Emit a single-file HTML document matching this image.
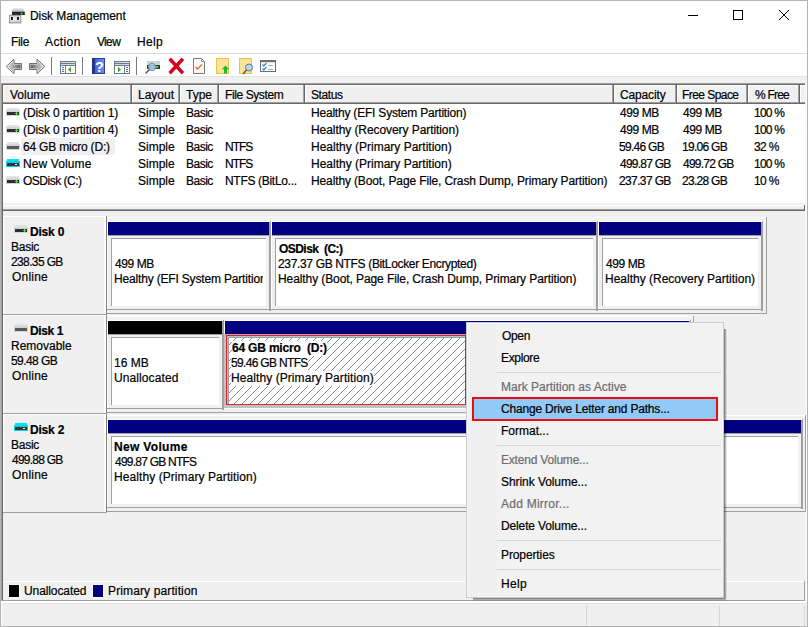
<!DOCTYPE html>
<html><head><meta charset="utf-8"><style>
html,body{margin:0;padding:0}
body{width:808px;height:627px;overflow:hidden;position:relative;background:#fff}
body>div{position:absolute}
.t{position:absolute;-webkit-text-stroke:0.2px currentColor;font-family:"Liberation Sans",sans-serif;font-size:12px;line-height:15px;white-space:pre;color:#000}
</style></head><body>
<div style="left:0px;top:0px;width:808px;height:627px;background:#fff;"></div>
<div class="t" style="left:30px;top:9px;color:#000;letter-spacing:-0.071px;">Disk Management</div>
<div class="t" style="left:11px;top:35px;color:#000;letter-spacing:-0.333px;">File</div>
<div class="t" style="left:45px;top:35px;color:#000;letter-spacing:0.400px;">Action</div>
<div class="t" style="left:97px;top:35px;color:#000;letter-spacing:-0.667px;">View</div>
<div class="t" style="left:137px;top:35px;color:#000;letter-spacing:0.333px;">Help</div>
<div style="left:1px;top:53px;width:807px;height:1px;background:#dadada;"></div>
<div style="left:1px;top:76px;width:806px;height:1px;background:#e3e3e3;"></div>
<div style="left:1px;top:77px;width:806px;height:6px;background:#f0f0f0;"></div>
<div style="left:1px;top:83px;width:806px;height:127px;background:#fff;"></div>
<div style="left:1px;top:83px;width:806px;height:1px;background:#a0a0a0;"></div>
<div style="left:2px;top:84px;width:804px;height:1px;background:#696969;"></div>
<div style="left:1px;top:83px;width:1px;height:518px;background:#a0a0a0;"></div>
<div style="left:2px;top:84px;width:1px;height:517px;background:#696969;"></div>
<div style="left:3px;top:85px;width:803px;height:19px;background:#f0f0f0;"></div>
<div style="left:3px;top:85px;width:803px;height:1px;background:#fff;"></div>
<div style="left:3px;top:102px;width:803px;height:1px;background:#a0a0a0;"></div>
<div style="left:3px;top:103px;width:803px;height:1px;background:#696969;"></div>
<div style="left:3px;top:85px;width:1px;height:17px;background:#fff;"></div>
<div style="left:130px;top:85px;width:1px;height:17px;background:#a0a0a0;"></div>
<div style="left:131px;top:85px;width:1px;height:19px;background:#696969;"></div>
<div style="left:132px;top:85px;width:1px;height:17px;background:#fff;"></div>
<div style="left:178px;top:85px;width:1px;height:17px;background:#a0a0a0;"></div>
<div style="left:179px;top:85px;width:1px;height:19px;background:#696969;"></div>
<div style="left:180px;top:85px;width:1px;height:17px;background:#fff;"></div>
<div style="left:217px;top:85px;width:1px;height:17px;background:#a0a0a0;"></div>
<div style="left:218px;top:85px;width:1px;height:19px;background:#696969;"></div>
<div style="left:219px;top:85px;width:1px;height:17px;background:#fff;"></div>
<div style="left:303px;top:85px;width:1px;height:17px;background:#a0a0a0;"></div>
<div style="left:304px;top:85px;width:1px;height:19px;background:#696969;"></div>
<div style="left:305px;top:85px;width:1px;height:17px;background:#fff;"></div>
<div style="left:612px;top:85px;width:1px;height:17px;background:#a0a0a0;"></div>
<div style="left:613px;top:85px;width:1px;height:19px;background:#696969;"></div>
<div style="left:614px;top:85px;width:1px;height:17px;background:#fff;"></div>
<div style="left:675px;top:85px;width:1px;height:17px;background:#a0a0a0;"></div>
<div style="left:676px;top:85px;width:1px;height:19px;background:#696969;"></div>
<div style="left:677px;top:85px;width:1px;height:17px;background:#fff;"></div>
<div style="left:746px;top:85px;width:1px;height:17px;background:#a0a0a0;"></div>
<div style="left:747px;top:85px;width:1px;height:19px;background:#696969;"></div>
<div style="left:748px;top:85px;width:1px;height:17px;background:#fff;"></div>
<div style="left:798px;top:85px;width:1px;height:17px;background:#a0a0a0;"></div>
<div style="left:799px;top:85px;width:1px;height:19px;background:#696969;"></div>
<div style="left:800px;top:85px;width:1px;height:17px;background:#fff;"></div>
<div class="t" style="left:10px;top:88px;color:#000;letter-spacing:0.000px;">Volume</div>
<div class="t" style="left:138px;top:88px;color:#000;letter-spacing:0.000px;">Layout</div>
<div class="t" style="left:186px;top:88px;color:#000;letter-spacing:0.000px;">Type</div>
<div class="t" style="left:225px;top:88px;color:#000;letter-spacing:-0.400px;">File System</div>
<div class="t" style="left:311px;top:88px;color:#000;letter-spacing:-0.400px;">Status</div>
<div class="t" style="left:620px;top:88px;color:#000;letter-spacing:-0.143px;">Capacity</div>
<div class="t" style="left:682px;top:88px;color:#000;letter-spacing:-0.556px;">Free Space</div>
<div class="t" style="left:755px;top:88px;color:#000;letter-spacing:-0.800px;">% Free</div>
<div style="left:7px;top:108px;width:12px;height:2px;background:#e0e2e5;"></div>
<div style="left:6px;top:110px;width:14px;height:6px;background:#d2d4d8;"></div>
<div style="left:7px;top:112px;width:12px;height:3px;background:#2e2e2e;"></div>
<div style="left:15px;top:113px;width:3px;height:1px;background:#3cf03c;"></div>
<div style="left:16px;top:112px;width:1px;height:3px;background:#3cf03c;"></div>
<div class="t" style="left:23px;top:106px;color:#000;letter-spacing:-0.105px;">(Disk 0 partition 1)</div>
<div class="t" style="left:138px;top:106px;color:#000;letter-spacing:0.000px;">Simple</div>
<div class="t" style="left:186px;top:106px;color:#000;letter-spacing:-0.500px;">Basic</div>
<div class="t" style="left:311px;top:106px;color:#000;letter-spacing:-0.207px;">Healthy (EFI System Partition)</div>
<div class="t" style="left:620px;top:106px;color:#000;letter-spacing:-0.400px;">499 MB</div>
<div class="t" style="left:683px;top:106px;color:#000;letter-spacing:-0.400px;">499 MB</div>
<div class="t" style="left:754px;top:106px;color:#000;letter-spacing:-0.750px;">100 %</div>
<div style="left:7px;top:125px;width:12px;height:2px;background:#e0e2e5;"></div>
<div style="left:6px;top:127px;width:14px;height:6px;background:#d2d4d8;"></div>
<div style="left:7px;top:129px;width:12px;height:3px;background:#2e2e2e;"></div>
<div style="left:15px;top:130px;width:3px;height:1px;background:#3cf03c;"></div>
<div style="left:16px;top:129px;width:1px;height:3px;background:#3cf03c;"></div>
<div class="t" style="left:23px;top:123px;color:#000;letter-spacing:-0.105px;">(Disk 0 partition 4)</div>
<div class="t" style="left:138px;top:123px;color:#000;letter-spacing:0.000px;">Simple</div>
<div class="t" style="left:186px;top:123px;color:#000;letter-spacing:-0.500px;">Basic</div>
<div class="t" style="left:311px;top:123px;color:#000;letter-spacing:-0.074px;">Healthy (Recovery Partition)</div>
<div class="t" style="left:620px;top:123px;color:#000;letter-spacing:-0.400px;">499 MB</div>
<div class="t" style="left:683px;top:123px;color:#000;letter-spacing:-0.400px;">499 MB</div>
<div class="t" style="left:754px;top:123px;color:#000;letter-spacing:-0.750px;">100 %</div>
<div style="left:21px;top:138px;width:94px;height:17px;background:#f0f0f0;"></div>
<div style="left:7px;top:142px;width:12px;height:2px;background:#e0e2e5;"></div>
<div style="left:6px;top:144px;width:14px;height:6px;background:#d2d4d8;"></div>
<div style="left:7px;top:146px;width:12px;height:3px;background:#585858;"></div>
<div class="t" style="left:23px;top:140px;color:#000;letter-spacing:-0.200px;">64 GB micro (D:)</div>
<div class="t" style="left:138px;top:140px;color:#000;letter-spacing:0.000px;">Simple</div>
<div class="t" style="left:186px;top:140px;color:#000;letter-spacing:-0.500px;">Basic</div>
<div class="t" style="left:225px;top:140px;color:#000;letter-spacing:-1.000px;">NTFS</div>
<div class="t" style="left:311px;top:140px;color:#000;letter-spacing:0.000px;">Healthy (Primary Partition)</div>
<div class="t" style="left:619px;top:140px;color:#000;letter-spacing:-0.714px;">59.46 GB</div>
<div class="t" style="left:682px;top:140px;color:#000;letter-spacing:-0.714px;">19.06 GB</div>
<div class="t" style="left:754px;top:140px;color:#000;letter-spacing:-0.667px;">32 %</div>
<div style="left:7px;top:159px;width:12px;height:2px;background:#00e6f6;"></div>
<div style="left:6px;top:161px;width:14px;height:6px;background:#00d4e6;"></div>
<div style="left:7px;top:163px;width:12px;height:3px;background:#3a3030;"></div>
<div style="left:15px;top:164px;width:2px;height:1px;background:#ffffff;"></div>
<div class="t" style="left:23px;top:157px;color:#000;letter-spacing:0.111px;">New Volume</div>
<div class="t" style="left:138px;top:157px;color:#000;letter-spacing:0.000px;">Simple</div>
<div class="t" style="left:186px;top:157px;color:#000;letter-spacing:-0.500px;">Basic</div>
<div class="t" style="left:225px;top:157px;color:#000;letter-spacing:-1.000px;">NTFS</div>
<div class="t" style="left:311px;top:157px;color:#000;letter-spacing:0.000px;">Healthy (Primary Partition)</div>
<div class="t" style="left:620px;top:157px;color:#000;letter-spacing:-0.750px;">499.87 GB</div>
<div class="t" style="left:683px;top:157px;color:#000;letter-spacing:-0.750px;">499.72 GB</div>
<div class="t" style="left:754px;top:157px;color:#000;letter-spacing:-0.750px;">100 %</div>
<div style="left:7px;top:176px;width:12px;height:2px;background:#e0e2e5;"></div>
<div style="left:6px;top:178px;width:14px;height:6px;background:#d2d4d8;"></div>
<div style="left:7px;top:180px;width:12px;height:3px;background:#2e2e2e;"></div>
<div style="left:15px;top:181px;width:3px;height:1px;background:#3cf03c;"></div>
<div style="left:16px;top:180px;width:1px;height:3px;background:#3cf03c;"></div>
<div class="t" style="left:23px;top:174px;color:#000;letter-spacing:-0.500px;">OSDisk (C:)</div>
<div class="t" style="left:138px;top:174px;color:#000;letter-spacing:0.000px;">Simple</div>
<div class="t" style="left:186px;top:174px;color:#000;letter-spacing:-0.500px;">Basic</div>
<div class="t" style="left:225px;top:174px;color:#000;letter-spacing:-0.308px;">NTFS (BitLo...</div>
<div class="t" style="left:311px;top:174px;color:#000;letter-spacing:-0.127px;">Healthy (Boot, Page File, Crash Dump, Primary Partition)</div>
<div class="t" style="left:619px;top:174px;color:#000;letter-spacing:-0.625px;">237.37 GB</div>
<div class="t" style="left:682px;top:174px;color:#000;letter-spacing:-0.714px;">23.28 GB</div>
<div class="t" style="left:754px;top:174px;color:#000;letter-spacing:-0.667px;">10 %</div>
<div style="left:3px;top:203px;width:803px;height:2px;background:#f0f0f0;"></div>
<div style="left:3px;top:205px;width:803px;height:1px;background:#fff;"></div>
<div style="left:3px;top:206px;width:803px;height:3px;background:#f0f0f0;"></div>
<div style="left:3px;top:209px;width:803px;height:1px;background:#a0a0a0;"></div>
<div style="left:3px;top:210px;width:803px;height:1px;background:#696969;"></div>
<div style="left:804px;top:205px;width:1px;height:6px;background:#696969;"></div>
<div style="left:3px;top:211px;width:802px;height:390px;background:#f0f0f0;"></div>
<div style="left:805px;top:83px;width:1px;height:544px;background:#f4f4f4;"></div>
<div style="left:806px;top:83px;width:1px;height:544px;background:#fff;"></div>
<div style="left:807px;top:0px;width:1px;height:627px;background:#b4b4b4;"></div>
<div style="left:3px;top:216px;width:103px;height:1px;background:#fff;"></div>
<div style="left:3px;top:216px;width:1px;height:99px;background:#fff;"></div>
<div style="left:4px;top:217px;width:101px;height:97px;background:#f0f0f0;"></div>
<div style="left:104px;top:216px;width:1px;height:99px;background:#fff;"></div>
<div style="left:105px;top:217px;width:1px;height:98px;background:#fff;"></div>
<div style="left:106px;top:217px;width:1px;height:97px;background:#808080;"></div>
<div style="left:106px;top:216px;width:1px;height:1px;background:#909090;"></div>
<div style="left:3px;top:314px;width:104px;height:1px;background:#a0a0a0;"></div>
<div style="left:3px;top:315px;width:104px;height:1px;background:#fff;"></div>
<div style="left:15px;top:225px;width:12px;height:2px;background:#e0e2e5;"></div>
<div style="left:14px;top:227px;width:14px;height:6px;background:#d2d4d8;"></div>
<div style="left:15px;top:229px;width:12px;height:3px;background:#2e2e2e;"></div>
<div style="left:23px;top:230px;width:3px;height:1px;background:#3cf03c;"></div>
<div style="left:24px;top:229px;width:1px;height:3px;background:#3cf03c;"></div>
<div class="t" style="left:30px;top:225px;color:#000;font-weight:bold;letter-spacing:-0.200px;">Disk 0</div>
<div class="t" style="left:11px;top:240px;color:#000;letter-spacing:-0.250px;">Basic</div>
<div class="t" style="left:11px;top:255px;color:#000;letter-spacing:-0.625px;">238.35 GB</div>
<div class="t" style="left:12px;top:270px;color:#000;letter-spacing:0.200px;">Online</div>
<div style="left:107px;top:217px;width:660px;height:1px;background:#fff;"></div>
<div style="left:766px;top:217px;width:1px;height:97px;background:#a0a0a0;"></div>
<div style="left:107px;top:313px;width:660px;height:1px;background:#a0a0a0;"></div>
<div style="left:107px;top:221px;width:165px;height:1px;background:#fff;"></div>
<div style="left:107px;top:221px;width:1px;height:89px;background:#fff;"></div>
<div style="left:108px;top:222px;width:161px;height:13px;background:#000080;"></div>
<div style="left:269px;top:222px;width:1px;height:89px;background:#a0a0a0;"></div>
<div style="left:270px;top:221px;width:1px;height:90px;background:#a0a0a0;"></div>
<div style="left:108px;top:235px;width:163px;height:1px;background:#a0a0a0;"></div>
<div style="left:107px;top:309px;width:164px;height:1px;background:#a0a0a0;"></div>
<div style="left:111px;top:238px;width:155px;height:68px;background:#fff;"></div>
<div style="left:111px;top:238px;width:155px;height:1px;background:#a0a0a0;"></div>
<div style="left:111px;top:238px;width:1px;height:68px;background:#a0a0a0;"></div>
<div style="left:112px;top:239px;width:151px;height:67px;overflow:hidden">
<div class="t" style="left:3px;top:18px;color:#000;letter-spacing:-0.400px;">499 MB</div>
<div class="t" style="left:2px;top:33px;color:#000;letter-spacing:-0.172px;">Healthy (EFI System Partition)</div>
</div>
<div style="left:271px;top:221px;width:328px;height:1px;background:#fff;"></div>
<div style="left:271px;top:221px;width:1px;height:89px;background:#fff;"></div>
<div style="left:272px;top:222px;width:324px;height:13px;background:#000080;"></div>
<div style="left:596px;top:222px;width:1px;height:89px;background:#a0a0a0;"></div>
<div style="left:597px;top:221px;width:1px;height:90px;background:#a0a0a0;"></div>
<div style="left:272px;top:235px;width:326px;height:1px;background:#a0a0a0;"></div>
<div style="left:271px;top:309px;width:327px;height:1px;background:#a0a0a0;"></div>
<div style="left:275px;top:238px;width:318px;height:68px;background:#fff;"></div>
<div style="left:275px;top:238px;width:318px;height:1px;background:#a0a0a0;"></div>
<div style="left:275px;top:238px;width:1px;height:68px;background:#a0a0a0;"></div>
<div style="left:276px;top:239px;width:314px;height:67px;overflow:hidden">
<div class="t" style="left:3px;top:3px;color:#000;font-weight:bold;letter-spacing:-0.545px;">OSDisk&nbsp; (C:)</div>
<div class="t" style="left:2px;top:18px;color:#000;letter-spacing:-0.343px;">237.37 GB NTFS (BitLocker Encrypted)</div>
<div class="t" style="left:2px;top:33px;color:#000;letter-spacing:-0.091px;">Healthy (Boot, Page File, Crash Dump, Primary Partition)</div>
</div>
<div style="left:598px;top:221px;width:166px;height:1px;background:#fff;"></div>
<div style="left:598px;top:221px;width:1px;height:89px;background:#fff;"></div>
<div style="left:599px;top:222px;width:162px;height:13px;background:#000080;"></div>
<div style="left:761px;top:222px;width:1px;height:89px;background:#a0a0a0;"></div>
<div style="left:762px;top:221px;width:1px;height:90px;background:#a0a0a0;"></div>
<div style="left:599px;top:235px;width:164px;height:1px;background:#a0a0a0;"></div>
<div style="left:598px;top:309px;width:165px;height:1px;background:#a0a0a0;"></div>
<div style="left:602px;top:238px;width:156px;height:68px;background:#fff;"></div>
<div style="left:602px;top:238px;width:156px;height:1px;background:#a0a0a0;"></div>
<div style="left:602px;top:238px;width:1px;height:68px;background:#a0a0a0;"></div>
<div style="left:603px;top:239px;width:152px;height:67px;overflow:hidden">
<div class="t" style="left:3px;top:18px;color:#000;letter-spacing:-0.400px;">499 MB</div>
<div class="t" style="left:2px;top:33px;color:#000;letter-spacing:0.000px;">Healthy (Recovery Partition)</div>
</div>
<div style="left:3px;top:315px;width:103px;height:1px;background:#fff;"></div>
<div style="left:3px;top:315px;width:1px;height:99px;background:#fff;"></div>
<div style="left:4px;top:316px;width:101px;height:97px;background:#f0f0f0;"></div>
<div style="left:104px;top:315px;width:1px;height:99px;background:#fff;"></div>
<div style="left:105px;top:316px;width:1px;height:98px;background:#fff;"></div>
<div style="left:106px;top:316px;width:1px;height:97px;background:#808080;"></div>
<div style="left:106px;top:315px;width:1px;height:1px;background:#909090;"></div>
<div style="left:3px;top:413px;width:104px;height:1px;background:#a0a0a0;"></div>
<div style="left:3px;top:414px;width:104px;height:1px;background:#fff;"></div>
<div style="left:15px;top:324px;width:12px;height:2px;background:#e0e2e5;"></div>
<div style="left:14px;top:326px;width:14px;height:6px;background:#d2d4d8;"></div>
<div style="left:15px;top:328px;width:12px;height:3px;background:#585858;"></div>
<div class="t" style="left:30px;top:324px;color:#000;font-weight:bold;letter-spacing:-0.400px;">Disk 1</div>
<div class="t" style="left:11px;top:339px;color:#000;letter-spacing:0.000px;">Removable</div>
<div class="t" style="left:11px;top:354px;color:#000;letter-spacing:-0.571px;">59.48 GB</div>
<div class="t" style="left:12px;top:369px;color:#000;letter-spacing:0.200px;">Online</div>
<div style="left:107px;top:316px;width:587px;height:1px;background:#fff;"></div>
<div style="left:693px;top:316px;width:1px;height:97px;background:#a0a0a0;"></div>
<div style="left:107px;top:412px;width:587px;height:1px;background:#a0a0a0;"></div>
<div style="left:107px;top:320px;width:118px;height:1px;background:#fff;"></div>
<div style="left:107px;top:320px;width:1px;height:89px;background:#fff;"></div>
<div style="left:108px;top:321px;width:114px;height:13px;background:#000;"></div>
<div style="left:222px;top:321px;width:1px;height:89px;background:#a0a0a0;"></div>
<div style="left:223px;top:320px;width:1px;height:90px;background:#a0a0a0;"></div>
<div style="left:108px;top:334px;width:116px;height:1px;background:#a0a0a0;"></div>
<div style="left:107px;top:408px;width:117px;height:1px;background:#a0a0a0;"></div>
<div style="left:111px;top:337px;width:108px;height:68px;background:#fff;"></div>
<div style="left:111px;top:337px;width:108px;height:1px;background:#a0a0a0;"></div>
<div style="left:111px;top:337px;width:1px;height:68px;background:#a0a0a0;"></div>
<div style="left:112px;top:338px;width:104px;height:67px;overflow:hidden">
<div class="t" style="left:2px;top:18px;color:#000;letter-spacing:0.000px;">16 MB</div>
<div class="t" style="left:2px;top:33px;color:#000;letter-spacing:0.100px;">Unallocated</div>
</div>
<div style="left:224px;top:320px;width:468px;height:1px;background:#fff;"></div>
<div style="left:224px;top:320px;width:1px;height:89px;background:#fff;"></div>
<div style="left:225px;top:321px;width:464px;height:13px;background:#000080;"></div>
<div style="left:689px;top:321px;width:1px;height:89px;background:#a0a0a0;"></div>
<div style="left:690px;top:320px;width:1px;height:90px;background:#a0a0a0;"></div>
<div style="left:225px;top:334px;width:466px;height:1px;background:#a0a0a0;"></div>
<div style="left:224px;top:408px;width:467px;height:1px;background:#a0a0a0;"></div>
<div style="left:224px;top:334px;width:466px;height:74px;background:#b6c6c6;"></div>
<div style="left:225px;top:334px;width:464px;height:1px;background:#a4b0b0;"></div>
<div style="left:224px;top:408px;width:467px;height:1px;background:#f8f8f8;"></div>
<div style="left:228px;top:337px;width:458px;height:68px;background:#fff;"></div>
<div style="left:228px;top:337px;width:458px;height:1px;background:#a0a0a0;"></div>
<div style="left:228px;top:337px;width:1px;height:68px;background:#a0a0a0;"></div>
<svg style="position:absolute;left:229px;top:338px" width="456" height="67" shape-rendering="crispEdges"><defs><pattern id="hp" width="8" height="8" patternUnits="userSpaceOnUse"><g fill="#8c8c8c"><rect x="0" y="6" width="1" height="1"/><rect x="1" y="5" width="1" height="1"/><rect x="2" y="4" width="1" height="1"/><rect x="3" y="3" width="1" height="1"/><rect x="4" y="2" width="1" height="1"/><rect x="5" y="1" width="1" height="1"/><rect x="6" y="0" width="1" height="1"/><rect x="7" y="7" width="1" height="1"/></g></pattern></defs><rect width="100%" height="100%" fill="url(#hp)"/></svg>
<div style="left:226px;top:335px;width:240px;height:70px;border:1px solid #ec1c24;box-sizing:border-box"></div>
<div style="left:229px;top:338px;width:454px;height:67px;overflow:hidden">
<div class="t" style="left:3px;top:3px;color:#000;font-weight:bold;letter-spacing:-0.188px;background:#fff;">64 GB micro&nbsp; (D:)</div>
<div class="t" style="left:2px;top:18px;color:#000;letter-spacing:-0.667px;background:#fff;">59.46 GB NTFS</div>
<div class="t" style="left:2px;top:33px;color:#000;letter-spacing:0.077px;background:#fff;">Healthy (Primary Partition)</div>
</div>
<div style="left:3px;top:414px;width:103px;height:1px;background:#fff;"></div>
<div style="left:3px;top:414px;width:1px;height:99px;background:#fff;"></div>
<div style="left:4px;top:415px;width:101px;height:97px;background:#f0f0f0;"></div>
<div style="left:104px;top:414px;width:1px;height:99px;background:#fff;"></div>
<div style="left:105px;top:415px;width:1px;height:98px;background:#fff;"></div>
<div style="left:106px;top:415px;width:1px;height:97px;background:#808080;"></div>
<div style="left:106px;top:414px;width:1px;height:1px;background:#909090;"></div>
<div style="left:3px;top:512px;width:104px;height:1px;background:#a0a0a0;"></div>
<div style="left:15px;top:423px;width:12px;height:2px;background:#00e6f6;"></div>
<div style="left:14px;top:425px;width:14px;height:6px;background:#00d4e6;"></div>
<div style="left:15px;top:427px;width:12px;height:3px;background:#3a3030;"></div>
<div style="left:23px;top:428px;width:2px;height:1px;background:#ffffff;"></div>
<div class="t" style="left:30px;top:423px;color:#000;font-weight:bold;letter-spacing:-0.200px;">Disk 2</div>
<div class="t" style="left:11px;top:438px;color:#000;letter-spacing:-0.250px;">Basic</div>
<div class="t" style="left:12px;top:453px;color:#000;letter-spacing:-0.750px;">499.88 GB</div>
<div class="t" style="left:12px;top:468px;color:#000;letter-spacing:0.200px;">Online</div>
<div style="left:107px;top:415px;width:699px;height:1px;background:#fff;"></div>
<div style="left:805px;top:415px;width:1px;height:97px;background:#a0a0a0;"></div>
<div style="left:107px;top:511px;width:699px;height:1px;background:#a0a0a0;"></div>
<div style="left:107px;top:419px;width:697px;height:1px;background:#fff;"></div>
<div style="left:107px;top:419px;width:1px;height:89px;background:#fff;"></div>
<div style="left:108px;top:420px;width:693px;height:13px;background:#000080;"></div>
<div style="left:801px;top:420px;width:1px;height:89px;background:#a0a0a0;"></div>
<div style="left:802px;top:419px;width:1px;height:90px;background:#a0a0a0;"></div>
<div style="left:108px;top:433px;width:695px;height:1px;background:#a0a0a0;"></div>
<div style="left:107px;top:507px;width:696px;height:1px;background:#a0a0a0;"></div>
<div style="left:111px;top:436px;width:687px;height:68px;background:#fff;"></div>
<div style="left:111px;top:436px;width:687px;height:1px;background:#a0a0a0;"></div>
<div style="left:111px;top:436px;width:1px;height:68px;background:#a0a0a0;"></div>
<div style="left:112px;top:437px;width:683px;height:67px;overflow:hidden">
<div class="t" style="left:2px;top:3px;color:#000;font-weight:bold;letter-spacing:0.333px;">New Volume</div>
<div class="t" style="left:3px;top:18px;color:#000;letter-spacing:-0.769px;">499.87 GB NTFS</div>
<div class="t" style="left:2px;top:33px;color:#000;letter-spacing:0.077px;">Healthy (Primary Partition)</div>
</div>
<div style="left:3px;top:581px;width:801px;height:1px;background:#fff;"></div>
<div style="left:804px;top:581px;width:1px;height:20px;background:#a0a0a0;"></div>
<div style="left:3px;top:582px;width:801px;height:18px;background:#f0f0f0;"></div>
<div style="left:8px;top:584px;width:12px;height:14px;background:#fff;"></div>
<div style="left:9px;top:585px;width:10px;height:12px;background:#000;"></div>
<div class="t" style="left:24px;top:584px;color:#000;letter-spacing:-0.100px;">Unallocated</div>
<div style="left:92px;top:584px;width:12px;height:14px;background:#fff;"></div>
<div style="left:93px;top:585px;width:10px;height:12px;background:#000080;"></div>
<div class="t" style="left:108px;top:584px;color:#000;letter-spacing:0.125px;">Primary partition</div>
<div style="left:2px;top:600px;width:803px;height:1px;background:#a0a0a0;"></div>
<div style="left:1px;top:601px;width:806px;height:25px;background:#f0f0f0;"></div>
<div style="left:1px;top:601px;width:806px;height:1px;background:#fff;"></div>
<div style="left:1px;top:602px;width:806px;height:1px;background:#fff;"></div>
<div style="left:1px;top:603px;width:806px;height:1px;background:#e3e3e3;"></div>
<div style="left:1px;top:601px;width:1px;height:25px;background:#fff;"></div>
<div style="left:586px;top:605px;width:1px;height:21px;background:#d8d8d8;"></div>
<div style="left:719px;top:605px;width:1px;height:21px;background:#d8d8d8;"></div>
<div style="left:804px;top:605px;width:1px;height:21px;background:#d8d8d8;"></div>
<div style="left:0px;top:626px;width:808px;height:1px;background:#b4b4b4;"></div>
<div style="left:724px;top:329px;width:1px;height:269px;background:rgba(0,0,0,0.45);"></div>
<div style="left:473px;top:598px;width:251px;height:1px;background:rgba(0,0,0,0.45);"></div>
<div style="left:725px;top:329px;width:1px;height:269px;background:rgba(0,0,0,0.28);"></div>
<div style="left:473px;top:599px;width:251px;height:1px;background:rgba(0,0,0,0.28);"></div>
<div style="left:726px;top:329px;width:1px;height:269px;background:rgba(0,0,0,0.08);"></div>
<div style="left:473px;top:600px;width:251px;height:1px;background:rgba(0,0,0,0.08);"></div>
<div style="left:724px;top:598px;width:1px;height:1px;background:rgba(0,0,0,0.383);"></div>
<div style="left:724px;top:599px;width:1px;height:1px;background:rgba(0,0,0,0.238);"></div>
<div style="left:724px;top:600px;width:1px;height:1px;background:rgba(0,0,0,0.068);"></div>
<div style="left:725px;top:598px;width:1px;height:1px;background:rgba(0,0,0,0.238);"></div>
<div style="left:725px;top:599px;width:1px;height:1px;background:rgba(0,0,0,0.238);"></div>
<div style="left:725px;top:600px;width:1px;height:1px;background:rgba(0,0,0,0.068);"></div>
<div style="left:726px;top:598px;width:1px;height:1px;background:rgba(0,0,0,0.068);"></div>
<div style="left:726px;top:599px;width:1px;height:1px;background:rgba(0,0,0,0.068);"></div>
<div style="left:726px;top:600px;width:1px;height:1px;background:rgba(0,0,0,0.068);"></div>
<div style="left:466px;top:322px;width:258px;height:276px;background:#f2f2f2;border:1px solid #cccccc;box-sizing:border-box"></div>
<div style="left:467px;top:323px;width:1px;height:274px;background:#f6f6f6;"></div>
<div style="left:467px;top:323px;width:256px;height:1px;background:#f6f6f6;"></div>
<div style="left:722px;top:324px;width:1px;height:273px;background:#f6f6f6;"></div>
<div style="left:468px;top:324px;width:29px;height:272px;background:#f0f0f0;"></div>
<div style="left:497px;top:372px;width:224px;height:1px;background:#d7d7d7;"></div>
<div style="left:497px;top:445px;width:224px;height:1px;background:#d7d7d7;"></div>
<div style="left:497px;top:540px;width:224px;height:1px;background:#d7d7d7;"></div>
<div style="left:497px;top:569px;width:224px;height:1px;background:#d7d7d7;"></div>
<div style="left:472px;top:397px;width:246px;height:24px;background:#91c9f7;border:2px solid #ec0c14;box-sizing:border-box"></div>
<div class="t" style="left:502px;top:329px;color:#000;letter-spacing:-0.333px;">Open</div>
<div class="t" style="left:501px;top:351px;color:#000;letter-spacing:-0.333px;">Explore</div>
<div class="t" style="left:501px;top:380px;color:#6d6d6d;letter-spacing:0.000px;">Mark Partition as Active</div>
<div class="t" style="left:501px;top:402px;color:#000;letter-spacing:-0.194px;">Change Drive Letter and Paths...</div>
<div class="t" style="left:501px;top:424px;color:#000;letter-spacing:0.000px;">Format...</div>
<div class="t" style="left:501px;top:453px;color:#6d6d6d;letter-spacing:-0.200px;">Extend Volume...</div>
<div class="t" style="left:501px;top:475px;color:#000;letter-spacing:-0.067px;">Shrink Volume...</div>
<div class="t" style="left:501px;top:497px;color:#6d6d6d;letter-spacing:0.250px;">Add Mirror...</div>
<div class="t" style="left:501px;top:519px;color:#000;letter-spacing:-0.133px;">Delete Volume...</div>
<div class="t" style="left:501px;top:548px;color:#000;letter-spacing:-0.111px;">Properties</div>
<div class="t" style="left:501px;top:577px;color:#000;letter-spacing:0.333px;">Help</div>
<div style="left:688px;top:15px;width:10px;height:1px;background:#000;"></div>
<div style="left:733px;top:10px;width:10px;height:10px;border:1px solid #000;box-sizing:border-box"></div>
<svg style="position:absolute;left:778px;top:9px" width="12" height="12"><path d="M1 1 L11 11 M11 1 L1 11" stroke="#000" stroke-width="1"/></svg>
<div style="left:0px;top:0px;width:808px;height:1px;background:#b4b4b4;"></div>
<div style="left:0px;top:0px;width:1px;height:627px;background:#b4b4b4;"></div>
<svg style="position:absolute;left:0;top:54px" width="290" height="23" viewBox="0 0 290 23">
<defs>
<linearGradient id="ga" x1="0" y1="0" x2="0" y2="1"><stop offset="0" stop-color="#b8b8b8"/><stop offset="0.5" stop-color="#7c7c7c"/><stop offset="1" stop-color="#a8a8a8"/></linearGradient>
<linearGradient id="gh" x1="0" y1="0" x2="1" y2="0"><stop offset="0" stop-color="#24399a"/><stop offset="0.35" stop-color="#4f6fd8"/><stop offset="1" stop-color="#6f8ff0"/></linearGradient>
</defs>
<linearGradient id="gl" x1="0" y1="0" x2="1" y2="0"><stop offset="0" stop-color="#d4d4d4"/><stop offset="0.45" stop-color="#a8a8a8"/><stop offset="1" stop-color="#5c5c5c"/></linearGradient>
<linearGradient id="gr" x1="1" y1="0" x2="0" y2="0"><stop offset="0" stop-color="#d4d4d4"/><stop offset="0.45" stop-color="#a8a8a8"/><stop offset="1" stop-color="#5c5c5c"/></linearGradient>
<path d="M6.2 12.5 L14 5.2 L14 9.5 L21.5 9.5 L21.5 15.5 L14 15.5 L14 19.8 Z" fill="#ececec" stroke="#707070" stroke-width="1" stroke-linejoin="round"/>
<path d="M8 12.5 L13 7.8 L13 10.5 L20.5 10.5 L20.5 14.5 L13 14.5 L13 17.2 Z" fill="url(#gl)"/>
<path d="M44.8 12.5 L37 5.2 L37 9.5 L29.5 9.5 L29.5 15.5 L37 15.5 L37 19.8 Z" fill="#ececec" stroke="#707070" stroke-width="1" stroke-linejoin="round"/>
<path d="M43 12.5 L38 7.8 L38 10.5 L30.5 10.5 L30.5 14.5 L38 14.5 L38 17.2 Z" fill="url(#gr)"/>
<rect x="51" y="3" width="1" height="18" fill="#7d7d7d"/>
<rect x="60.5" y="7.5" width="15" height="12" fill="#fff" stroke="#6f7886"/>
<rect x="61" y="8" width="9" height="1" fill="#d0d7e2"/><rect x="71" y="8" width="1" height="1" fill="#d0d7e2"/><rect x="73" y="8" width="1" height="1" fill="#d0d7e2"/>
<rect x="61" y="9" width="14" height="1" fill="#6f7886"/>
<rect x="61" y="10" width="14" height="1" fill="#d0d7e2"/>
<rect x="61" y="11" width="14" height="1" fill="#6f7886"/>
<rect x="65" y="12" width="1" height="7" fill="#6f7886"/>
<rect x="62" y="13" width="2" height="1" fill="#3a78c8"/><rect x="62" y="15" width="2" height="1" fill="#3a78c8"/><rect x="62" y="17" width="2" height="1" fill="#3a78c8"/>
<path d="M67.8 15.5 L71 12.8 L71 18.2 Z" fill="#34b034"/>
<rect x="82" y="3" width="1" height="18" fill="#7d7d7d"/>
<rect x="92" y="4" width="13" height="16" fill="url(#gh)"/>
<rect x="92" y="4" width="3" height="16" fill="#23388f"/>
<rect x="92.4" y="4.4" width="12.2" height="15.2" fill="none" stroke="#1c2f80" stroke-width="0.8"/>
<text x="99.5" y="17.6" font-family="Liberation Sans" font-weight="bold" font-size="14.5" fill="#fff" text-anchor="middle">?</text>
<rect x="114.5" y="7.5" width="15" height="12" fill="#fff" stroke="#6f7886"/>
<rect x="115" y="8" width="9" height="1" fill="#d0d7e2"/><rect x="125" y="8" width="1" height="1" fill="#d0d7e2"/><rect x="127" y="8" width="1" height="1" fill="#d0d7e2"/>
<rect x="115" y="9" width="14" height="1" fill="#6f7886"/>
<rect x="115" y="10" width="14" height="1" fill="#d0d7e2"/>
<rect x="115" y="11" width="14" height="1" fill="#6f7886"/>
<rect x="124" y="12" width="1" height="7" fill="#6f7886"/>
<rect x="126" y="13" width="2" height="1" fill="#3a78c8"/><rect x="126" y="15" width="2" height="1" fill="#3a78c8"/><rect x="126" y="17" width="2" height="1" fill="#3a78c8"/>
<path d="M121.2 15.5 L118 12.8 L118 18.2 Z" fill="#34b034"/>
<rect x="136" y="3" width="1" height="18" fill="#7d7d7d"/>
<rect x="147" y="7" width="13" height="4" fill="#cfd2d6"/>
<rect x="147" y="11" width="13" height="4" fill="#3a3a3a"/>
<rect x="155" y="12" width="3" height="2" fill="#2ee82e"/>
<circle cx="152" cy="13" r="3.6" fill="#a9cfe8" fill-opacity="0.9" stroke="#6a8aa0" stroke-width="1"/>
<path d="M149.5 15.5 L145.5 19.5" stroke="#4a5a6a" stroke-width="1.4"/>
<path d="M170.8 6 L181.8 18 M181.8 6 L170.8 18" stroke="#d4041c" stroke-width="3.4" stroke-linecap="square"/>
<path d="M193.5 4.5 L201.5 4.5 L204.5 7.5 L204.5 19.5 L193.5 19.5 Z" fill="#fafafa" stroke="#7a7a7a"/>
<path d="M201.5 4.5 L201.5 7.5 L204.5 7.5" fill="none" stroke="#9a9a9a"/>
<path d="M195.5 13 L197.5 15 L202 10.5" fill="none" stroke="#f06a2a" stroke-width="1.4"/>
<rect x="216.5" y="4.5" width="12" height="15" fill="#fbe39a" stroke="#e9c24a"/>
<path d="M225.5 11.5 L229.2 15.2 L227 15.2 L227 19.5 L224 19.5 L224 15.2 L221.8 15.2 Z" fill="#22b822"/>
<rect x="239.5" y="4.5" width="12" height="15" fill="#fbe39a" stroke="#e9c24a"/>
<circle cx="249" cy="13.5" r="3.5" fill="#b8d8ea" stroke="#5c7a90"/>
<path d="M246.5 16 L243 20" stroke="#4a5a6a" stroke-width="1.4"/>
<rect x="260.5" y="6.5" width="15" height="11" fill="#fff" stroke="#6f6f6f"/>
<rect x="261" y="7" width="14" height="1.2" fill="#6f6f6f"/>
<path d="M262.5 10.5 L263.8 12 L266.5 9" fill="none" stroke="#2f86e0" stroke-width="1.2"/>
<path d="M262.5 14.5 L263.8 16 L266.5 13" fill="none" stroke="#2f86e0" stroke-width="1.2"/>
<rect x="268" y="11" width="5" height="1" fill="#b0b0b0"/><rect x="268" y="15" width="5" height="1" fill="#b0b0b0"/>
</svg>
<svg style="position:absolute;left:9px;top:8px" width="17" height="16">
<defs><linearGradient id="gd" x1="0" y1="0" x2="0" y2="1"><stop offset="0" stop-color="#e2e3e5"/><stop offset="1" stop-color="#b8babd"/></linearGradient>
<linearGradient id="gp" x1="0" y1="0" x2="0" y2="1"><stop offset="0" stop-color="#c8c8c8"/><stop offset="0.5" stop-color="#f4f4f4"/><stop offset="1" stop-color="#bdbdbd"/></linearGradient></defs>
<path d="M3.8 0.2 L14.2 0.2 L15.6 3.8 L2.6 3.8 Z" fill="url(#gd)"/>
<rect x="3" y="3.7" width="12.8" height="3.3" fill="#262626"/>
<rect x="11.8" y="4.7" width="1.6" height="1.6" fill="#3cff3c"/>
<rect x="0.5" y="7.3" width="11.3" height="7.6" fill="url(#gp)" stroke="#8c8c8c" stroke-width="0.9"/>
<rect x="2" y="9" width="1.9" height="3" fill="#141414"/><rect x="8" y="9" width="1.9" height="3" fill="#141414"/>
</svg>
</body></html>
